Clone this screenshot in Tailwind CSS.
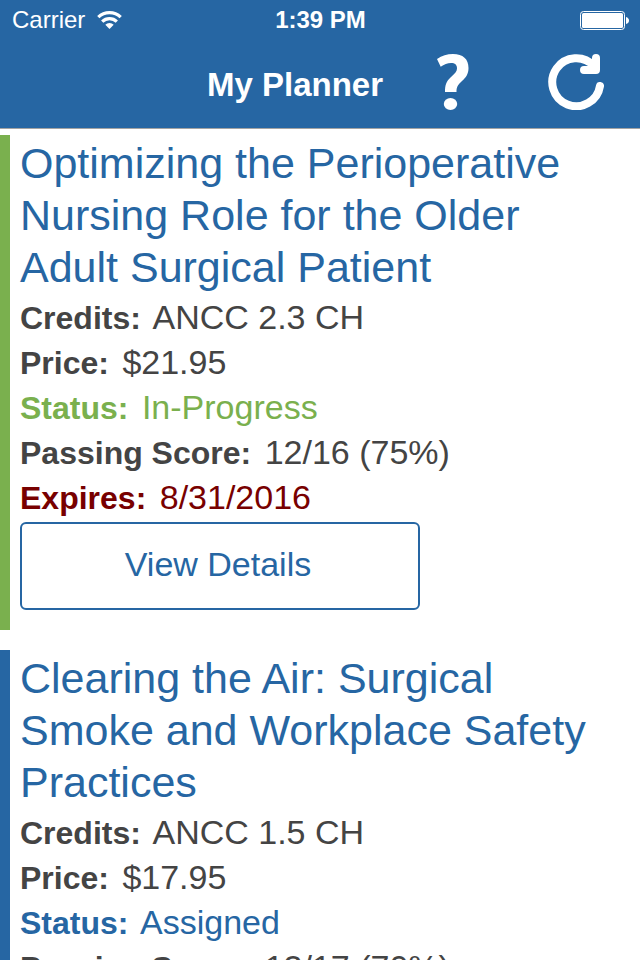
<!DOCTYPE html>
<html lang="en">
<head>
    <meta charset="UTF-8">
    <meta name="viewport" content="width=device-width, initial-scale=1.0">
    <title>My Planner</title>
    <script src="https://cdn.jsdelivr.net/npm/@tailwindcss/browser@4"></script>
</head>
<body class="h-screen overflow-hidden bg-white font-['Liberation_Sans',Arial,sans-serif] text-[#444444]">

    <!-- Header -->
    <header class="border-b border-[#a3a3a3] bg-[#2666a3] text-white">
        <div class="grid h-10 grid-cols-3 items-center pl-3 pr-[11px]">
            <div class="flex items-center gap-3">
                <span class="text-2xl">Carrier</span>
                <svg class="h-[18px] w-[25px]" viewBox="0 0 25 18" fill="none" stroke="currentColor" stroke-width="3.2">
                    <path d="M1.3 6.2a16 16 0 0 1 22.4 0" />
                    <path d="M5.2 10.6a10.4 10.4 0 0 1 14.6 0" />
                    <path d="M12.5 18 8.3 13.8a6 6 0 0 1 8.4 0Z" fill="currentColor" stroke="none" />
                </svg>
            </div>
            <span class="text-center text-2xl font-bold">1:39 PM</span>
            <svg class="h-5 w-[49px] justify-self-end" viewBox="0 0 49 20">
                <rect x="0.5" y="1.5" width="44" height="18" rx="3" fill="none" stroke="currentColor" />
                <rect x="2" y="3" width="41" height="15" rx="1.5" fill="currentColor" />
                <path d="M46 7q3 1 3 3.500t-3 3.500Z" fill="currentColor" />
            </svg>
        </div>
        <div class="flex h-[88px] items-start justify-end pr-9 pt-[14px]">
            <h1 class="mr-[54px] text-[33px] leading-[62px] font-bold">My Planner</h1>
            <button type="button" aria-label="Help" class="mr-[79px]">
                <svg class="h-14 w-8" viewBox="0 0 32 56" fill="currentColor">
                    <path d="M0 5C5 1.500 10 0 16 0c10 0 15.500 5 15.500 14 0 6-2.500 9.500-6.500 13-4.500 4-5.500 6-5.500 11H8c0-6.500 1-10.500 6-15 4-3.700 6-5.500 6-8.500 0-3.700-2-5.500-6-5.500-3.500 0-7 1.500-10.300 3.700Z" />
                    <ellipse cx="13.500" cy="50" rx="6.700" ry="6" />
                </svg>
            </button>
            <button type="button" aria-label="Refresh">
                <svg class="size-14" viewBox="0 0 56 56" fill="none" stroke="currentColor" stroke-width="8" stroke-linecap="round" stroke-linejoin="round">
                    <path d="M52 32A24 24 0 1 1 46 12" />
                    <path d="M36 16H48V4" />
                </svg>
            </button>
        </div>
    </header>

    <!-- Course list -->
    <main class="flex flex-col gap-5 pt-[6px]">
        <article class="border-l-[10px] border-[#7ab04e] px-[10px] pt-[2px] pb-5">
            <h2 class="mb-[2px] text-[43px] leading-[52px] text-[#2666a3]">Optimizing the Perioperative<br>Nursing Role for the Older<br>Adult Surgical Patient</h2>
            <div class="text-[34px] leading-[45px]">
                <p><b class="mr-1 text-[32px] leading-none">Credits:</b> ANCC 2.3 CH</p>
                <p><b class="mr-1 text-[32px] leading-none">Price:</b> $21.95</p>
                <p class="text-[#7ab04e]"><b class="mr-1 text-[32px] leading-none">Status:</b> In-Progress</p>
                <p><b class="mr-1 text-[32px] leading-none">Passing Score:</b> 12/16 (75%)</p>
                <p class="text-[#780000]"><b class="mr-1 text-[32px] leading-none">Expires:</b> 8/31/2016</p>
            </div>
            <button type="button" class="mt-[2px] block h-[88px] w-full max-w-[400px] rounded-md border-2 border-[#2666a3] pr-1 pb-1 text-[34px] text-[#2666a3]">View Details</button>
        </article>

        <article class="border-l-[10px] border-[#2666a3] px-[10px] pt-[2px] pb-5">
            <h2 class="mb-[2px] text-[43px] leading-[52px] text-[#2666a3]">Clearing the Air: Surgical<br>Smoke and Workplace Safety<br>Practices</h2>
            <div class="text-[34px] leading-[45px]">
                <p><b class="mr-1 text-[32px] leading-none">Credits:</b> ANCC 1.5 CH</p>
                <p><b class="mr-1 text-[32px] leading-none">Price:</b> $17.95</p>
                <p class="text-[#2666a3]"><b class="mr-1 text-[32px] leading-none">Status:</b> Assigned</p>
                <p><b class="mr-1 text-[32px] leading-none">Passing Score:</b> 12/17 (70%)</p>
            </div>
        </article>
    </main>

</body>
</html>
